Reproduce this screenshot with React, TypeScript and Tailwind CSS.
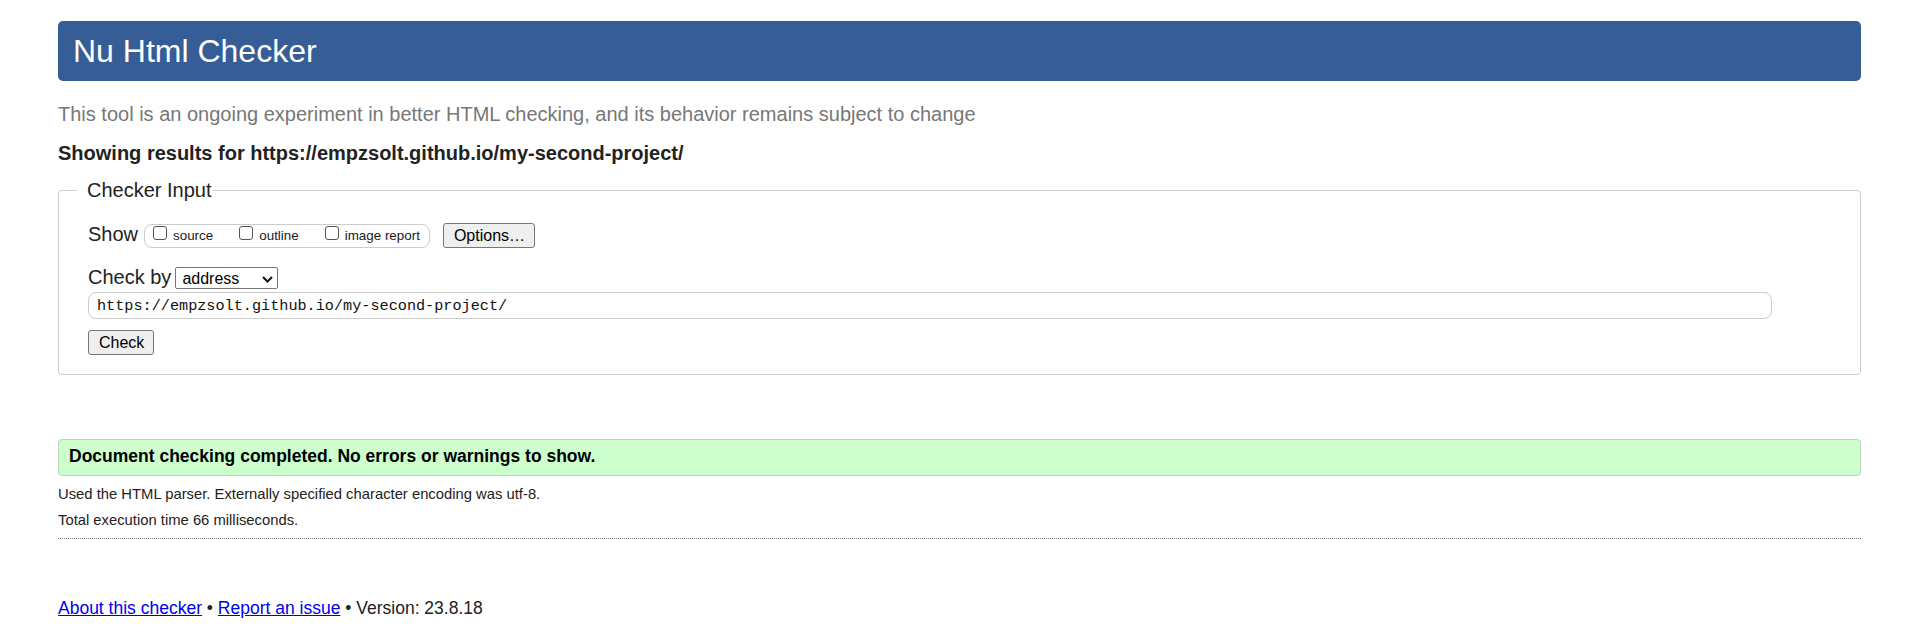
import { useState } from "react";

const sans = { fontFamily: '"Liberation Sans", Arial, sans-serif' };

function Checkbox({ label }: { label: string }) {
  const [checked, setChecked] = useState(false);
  return (
    <label className="flex items-start gap-[6px] cursor-pointer">
      <input
        type="checkbox"
        checked={checked}
        onChange={() => setChecked(!checked)}
        className="appearance-none mt-[1px] w-[14px] h-[14px] border border-[#555] rounded-[3px] bg-white checked:bg-[#0075ff]"
      />
      <span className="mt-[3px] text-[13.4px] leading-[16px] text-[#222]">{label}</span>
    </label>
  );
}

export default function App() {
  const [url, setUrl] = useState("https://empzsolt.github.io/my-second-project/");

  return (
    <div className="min-h-screen bg-white pt-[21px] pl-[58px] pr-[52px] text-[#222]" style={sans}>
      {/* header */}
      <h1 className="h-[60px] flex items-center pl-[15px] bg-[#365d95] text-white text-[32px] leading-[37px] font-normal rounded-[5px]">
        Nu Html Checker
      </h1>

      <p className="mt-[21px] text-[20px] leading-[24px] text-[#777]">
        This tool is an ongoing experiment in better HTML checking, and its behavior remains subject to change
      </p>
      <p className="mt-[15px] text-[20px] leading-[24px] font-bold text-[#222]">
        Showing results for https://empzsolt.github.io/my-second-project/
      </p>

      {/* checker input */}
      <div className="relative mt-[25px] border border-[#ccc] rounded-[4px] pt-[32px] pb-[19px] pl-[29px] pr-[88px]">
        <span className="absolute -top-[13px] left-[18px] bg-white pl-[10px] pr-[1px] text-[20px] leading-[24px]">
          Checker Input
        </span>

        <div className="flex items-start h-[26px]">
          <span className="-mt-[1px] text-[20px] leading-[24px]">Show</span>
          <div className="ml-[6px] mt-[1px] h-[24px] flex items-start gap-[26px] border border-[#ccc] rounded-[8px] pl-[8px] pr-[9px]">
            <Checkbox label="source" />
            <Checkbox label="outline" />
            <Checkbox label="image report" />
          </div>
          <button className="ml-[13px] h-[25px] pl-[10px] pr-[9px] border border-[#767676] rounded-[3px] bg-[#efefef] text-[16px] leading-[18px] text-black">
            Options…
          </button>
        </div>

        <div className="mt-[18px] flex items-start h-[22px]">
          <span className="-mt-[2px] text-[20px] leading-[24px]">Check by</span>
          <div className="ml-[4px] w-[103px] h-[22px] flex items-start pt-[2px] pl-[6px] border border-[#767676] rounded-[2px] text-[16px] leading-[18px] text-black">
            address
            <svg className="ml-auto mr-[4px] self-center" width="11" height="7" viewBox="0 0 11 7">
              <path d="M1 1 L5.5 5.5 L10 1" fill="none" stroke="#111" strokeWidth="2" />
            </svg>
          </div>
        </div>

        <input
          value={url}
          onChange={(e) => setUrl(e.target.value)}
          className="mt-[3px] block w-full h-[27px] pl-[8px] border border-[#ccc] rounded-[8px] text-[15.2px] text-[#111] outline-none"
          style={{ fontFamily: '"Liberation Mono", Consolas, monospace' }}
        />

        <button className="mt-[11px] block h-[25px] pl-[10px] pr-[9px] border border-[#767676] rounded-[3px] bg-[#efefef] text-[16px] leading-[18px] text-black">
          Check
        </button>
      </div>

      {/* result */}
      <div className="mt-[64px] h-[37px] pt-[6px] pl-[10px] bg-[#ccffcc] border border-[#bcd4bc] rounded-[4px] text-[17.5px] leading-[21px] font-bold text-black">
        Document checking completed. No errors or warnings to show.
      </div>
      <p className="mt-[5px] text-[14.8px] leading-[26px] text-[#222]">
        Used the HTML parser. Externally specified character encoding was utf-8.
      </p>
      <p className="text-[14.8px] leading-[26px] text-[#222]">Total execution time 66 milliseconds.</p>
      <div className="mt-[5px] border-t border-dotted border-[#777]" />

      {/* footer */}
      <p className="mt-[59px] text-[17.5px] leading-[21px] text-[#222]">
        <a href="#" className="text-[#0000ee] underline">About this checker</a>
        {" • "}
        <a href="#" className="text-[#0000ee] underline">Report an issue</a>
        {" • Version: 23.8.18"}
      </p>
    </div>
  );
}
